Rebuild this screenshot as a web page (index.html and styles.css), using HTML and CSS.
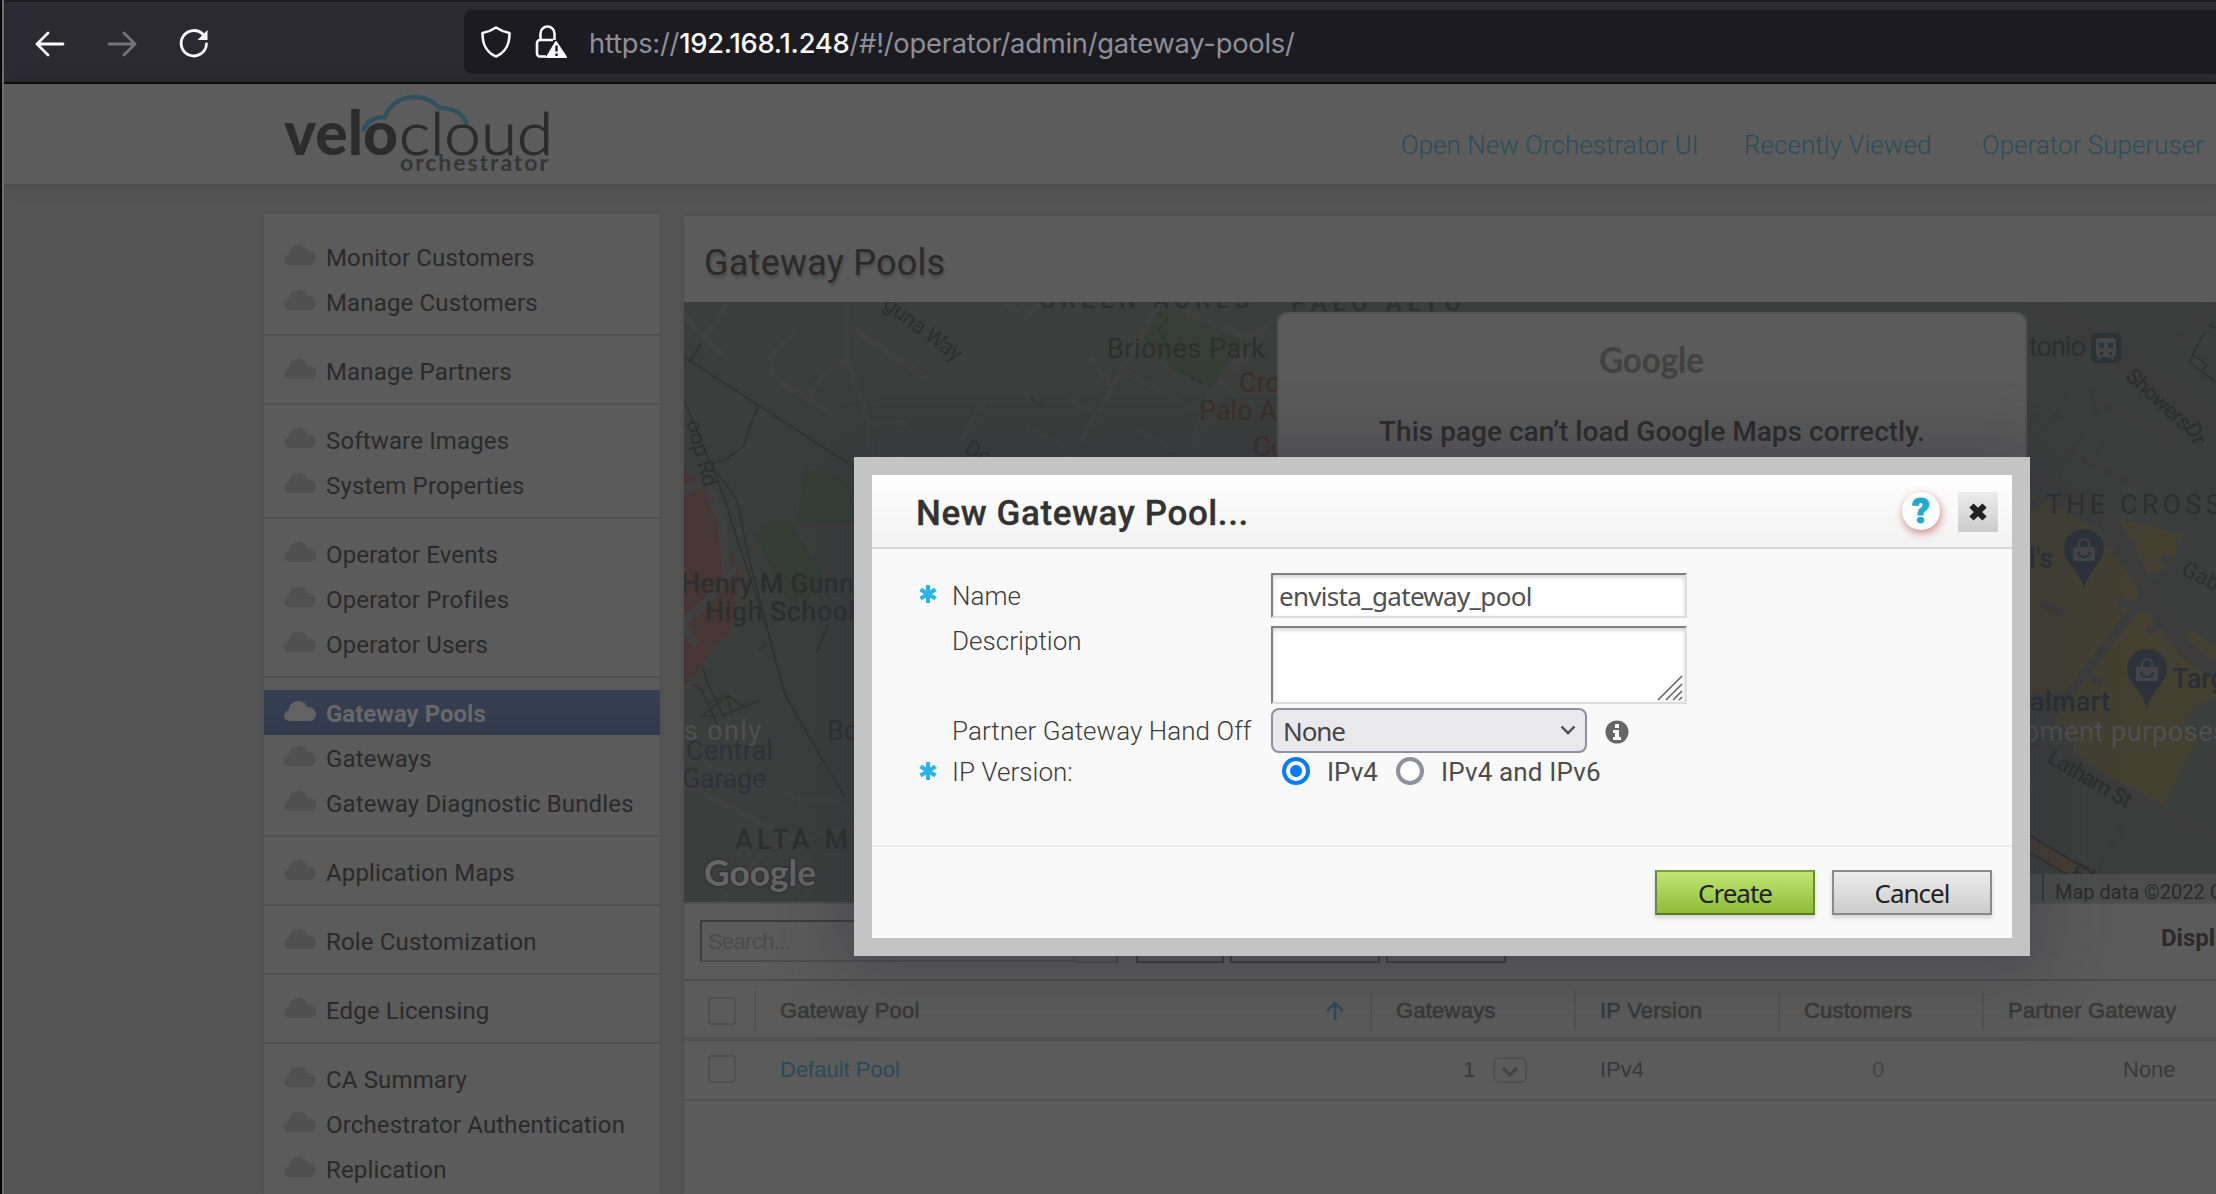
FILE: index.html
```html
<!DOCTYPE html>
<html lang="en">
<head>
<meta charset="utf-8">
<title>Gateway Pools</title>
<link rel="stylesheet" href="styles.css">
</head>
<body>
<svg class="defs" width="0" height="0" aria-hidden="true">
  <symbol id="cloud" viewBox="0 0 32 20"><path d="M6 20C2 20 0 17.500 0 15c0-3 2-5 4.500-5.500C5 4 9 0 14 0c5 0 8 2.500 9.500 6 5 0 8.500 3 8.500 7.200C32 17 29.500 20 26 20z"/></symbol>
  <symbol id="star" viewBox="0 0 18 20"><path d="M9 1v18M1.500 5.500l15 9M16.500 5.500l-15 9" stroke="#28b5ee" stroke-width="4" fill="none"/></symbol>
  <symbol id="pin" viewBox="0 0 42 60"><path d="M21 0a20 20 0 0 1 20 20c0 14-15 20-20 39C16 40 1 34 1 20A20 20 0 0 1 21 0z" fill="#2e323b"/><path d="M10 18h22v14H10z" fill="#424448"/><path d="M16 19v-4a5 5 0 0 1 10 0v4" fill="none" stroke="#424448" stroke-width="2"/><path d="M15 23a6 5 0 0 0 12 0" fill="none" stroke="#2e323b" stroke-width="2.200"/></symbol>
</svg>

<div class="window">
  <header class="toolbar">
    <div class="nav-icons">
      <svg width="30" height="28" viewBox="0 0 30 28" fill="none" stroke="#fbfbfe" stroke-width="2.800" stroke-linecap="round" stroke-linejoin="round"><path d="M28 14H2M13 3L2 14l11 11"/></svg>
      <svg width="30" height="28" viewBox="0 0 30 28" fill="none" stroke="#76757c" stroke-width="2.800" stroke-linecap="round" stroke-linejoin="round"><path d="M2 14h26M17 3l11 11-11 11"/></svg>
      <svg width="30" height="30" viewBox="0 0 30 30"><path d="M24.500 6A12.700 12.700 0 1 0 27.500 15" fill="none" stroke="#fbfbfe" stroke-width="2.800" stroke-linecap="round"/><path d="M28.500 1v10h-10z" fill="#fbfbfe"/></svg>
    </div>
    <div class="urlbar">
      <svg width="30" height="32" viewBox="0 0 30 32" fill="none" stroke="#fbfbfe" stroke-width="2.600" stroke-linejoin="round"><path d="M15 1.500c4 2.700 8 4.500 13.500 5.500 0 11-3 19-13.500 23.500C4.500 26 1.500 18 1.500 7 7 6 11 4.200 15 1.500z"/></svg>
      <svg class="lock" width="32" height="34" viewBox="0 0 32 34"><path d="M11 31.500H5a3 3 0 0 1-3-3V18a3 3 0 0 1 3-3h13M5.500 15V8.500a7 7 0 0 1 14 0V15" fill="none" stroke="#fbfbfe" stroke-width="2.600"/><path d="M21 17l10 15H12z" fill="#fbfbfe" stroke="#fbfbfe" stroke-width="2" stroke-linejoin="round"/><path d="M21.500 20.500v6M21.500 28.500v2.600" stroke="#1c1b22" stroke-width="2.400"/></svg>
      <span class="url">https://<b>192.168.1.248</b>/#!/operator/admin/gateway-pools/</span>
    </div>
  </header>

  <div class="app-header">
    <svg class="logo" width="270" height="84" viewBox="282 92 270 84">
      <path d="M363 127c3-8 10-14 22-14 5-13 16-20 30-20 10 0 19 5 25 11 14 0 24 6 27 17" transform="translate(0 4)" fill="none" stroke="#2c525f" stroke-width="4.500"/>
      <text x="284" y="155" class="logo-bold" textLength="114" lengthAdjust="spacingAndGlyphs">velo</text>
      <text x="399" y="155" class="logo-thin" textLength="154" lengthAdjust="spacingAndGlyphs">cloud</text>
      <text x="400" y="171" class="logo-sub" textLength="148">orchestrator</text>
    </svg>
    <nav class="top-nav"><a class="n1">Open New Orchestrator UI</a><a class="n2">Recently Viewed</a><a class="n3">Operator Superuser</a></nav>
  </div>

  <div class="workspace">
    <aside class="sidebar">
      <ul>
        <li><svg><use href="#cloud"/></svg>Monitor Customers</li>
        <li><svg><use href="#cloud"/></svg>Manage Customers</li>
      </ul>
      <ul><li><svg><use href="#cloud"/></svg>Manage Partners</li></ul>
      <ul>
        <li><svg><use href="#cloud"/></svg>Software Images</li>
        <li><svg><use href="#cloud"/></svg>System Properties</li>
      </ul>
      <ul>
        <li><svg><use href="#cloud"/></svg>Operator Events</li>
        <li><svg><use href="#cloud"/></svg>Operator Profiles</li>
        <li><svg><use href="#cloud"/></svg>Operator Users</li>
      </ul>
      <ul>
        <li class="active"><svg><use href="#cloud"/></svg>Gateway Pools</li>
        <li><svg><use href="#cloud"/></svg>Gateways</li>
        <li><svg><use href="#cloud"/></svg>Gateway Diagnostic Bundles</li>
      </ul>
      <ul><li><svg><use href="#cloud"/></svg>Application Maps</li></ul>
      <ul><li><svg><use href="#cloud"/></svg>Role Customization</li></ul>
      <ul><li><svg><use href="#cloud"/></svg>Edge Licensing</li></ul>
      <ul>
        <li><svg><use href="#cloud"/></svg>CA Summary</li>
        <li><svg><use href="#cloud"/></svg>Orchestrator Authentication</li>
        <li><svg><use href="#cloud"/></svg>Replication</li>
      </ul>
    </aside>

    <main class="panel">
      <h1>Gateway Pools</h1>
      <svg class="map" width="1532" height="600" viewBox="684 302 1532 600">
        <rect x="684" y="302" width="1532" height="600" fill="#3b3e3c"/>
        <path d="M684 470l19 15 20 45 17 47-7 46-49 64z" fill="#463635"/>
        <path d="M1157 310l37 3 53 24-36 53-37-20-31-33zM806 470l29 3 18 17v33l-57-1zM753 533l20-13 17 1 32 54-4 18-28 10z" fill="#363e37"/>
        <path d="M2030 515l16-17 50 32 43 58-3 19-67 86h-39zM2116 518l67 17-10 22-14 15-13 2-13-33zM2146 611l37 47 33 23v16l-17 8-16 15 13 20-33 66-50-24-40-31 3-15-30-20 23-23 70-82zM2189 629l27 17v20l-33-31zM2030 775q5 8 0 22zM2030 494l10 2-10 8z" fill="#434032"/>
        <g fill="none" stroke="#3e3f3e" stroke-width="7" stroke-linecap="round" stroke-linejoin="round">
          <path d="M847 302v55l22 70 2 32M850 327l79 53M793 332l-23 25 2 20 58 36M847 360l-22 13-17 25M728 302l-24 38-20-25M704 340l17 13M871 425l20-5 14 4M983 403l-32 56M1157 307l-36 63-48 88M1092 360l17 23M1121 370l73 40M1070 400l25 12M1029 427l46 26M1138 430l44 25M1189 313l56 24M1005 302l20 15 15-15"/>
          <path d="M1262 327l-50 70-25 65" stroke-width="12"/>
          <path d="M684 490l22-8 16 40 5 50M684 620l20-15 28-35M684 625l10 18" stroke-width="9"/>
          <path d="M684 755l60 25 60 20h30l22 15M684 785l80 40 40 20M720 902l50-55 84-20M806 902l6-45"/>
        </g>
        <g fill="none" stroke="#3c3c3c" stroke-width="6" stroke-linecap="round" stroke-linejoin="round">
          <path d="M2035 302l181 120" stroke-width="26"/>
          <path d="M2216 302l-45 52" stroke-width="12"/>
          <path d="M2028 350l50 20 15 32 103 44v50M2052 480l45-70 30-55M2100 402l22-35 50 50-40 62M2092 460l50-68M2075 455l70 35 28-70M2130 420l56 35M2150 500l36 4M2028 418l22 8 25-50M2060 330l60 32"/>
          <path d="M2030 478l40 12 33 28 26 35 17 35 40 62 30 23" stroke-width="15"/>
          <path d="M2046 724l93-121 24-22 22-24 11-62v-51" stroke-width="9"/>
          <path d="M2026 740l107 54 50 29 33 16M2133 802l-19 39-18 40M2216 755l-57 113-20 34" stroke-width="8"/>
          <path d="M2045 605l14 7M2165 558l10 6M2122 603l8 2M2092 677l6 6M2150 630l9-5" stroke-width="8"/>
          <path d="M2026 842l90 56" stroke-width="14" stroke="#463c32"/>
        </g>
        <path d="M2026 833l90 54M2026 850l80 48" stroke="#322f2c" stroke-width="2"/>
        <g fill="none" stroke="#313331" stroke-width="1.600">
          <path d="M684 357l74 48 96 62M758 405l-15 42-19 13-13 4M684 400l27 64 26 36 10 50 22 85 16 60 60 103M711 464l14 36 14 45 27 80M828 625l-11 27M702 342l-12 20M766 645l-7 4"/>
          <path d="M692 684l10 6 15 35M703 668l5 15 15 33 37-16M700 718l27-22 5 20M709 702l20-6 16 12M700 716h16"/>
          <path d="M1157 313l10 6-8 10 8 15M1180 370l25 15M1030 397l15 12" stroke-dasharray="6 4"/>
          <path d="M2209 325l22 10M2205 332l-16 30 27 20M2193 355l14 9-7 12"/>
        </g>
        <g class="map-label">
          <text x="1039" y="308" textLength="210" font-size="24" class="medium">GREEN ACRES</text>
          <text x="1291" y="311" textLength="170" font-size="24" class="medium">PALO ALTO</text>
          <text x="1107" y="358" textLength="158">Briones Park</text>
          <text transform="translate(882 307) rotate(37)" textLength="92" font-size="22">guna Way</text>
          <text transform="translate(963 452) rotate(31)" font-size="22">Don</text>
          <text transform="translate(686 422) rotate(75)" textLength="68" font-size="22">oop Rd</text>
          <g fill="#3d2e2e"><text x="1239" y="392">Cro</text><text x="1199" y="420">Palo A</text><text x="1253" y="456">Co</text></g>
          <g class="medium"><text x="681" y="593" textLength="173">Henry M Gunn</text><text x="705" y="621" textLength="150">High School</text></g>
          <g fill="#31313a"><text x="686" y="760" textLength="87">Central</text><text x="682" y="788" textLength="84">Garage</text></g>
          <text x="827" y="740">Bo</text>
          <text x="735" y="849" class="medium" textLength="113">ALTA M</text>
          <g fill="#505050"><text x="684" y="740" textLength="77">s only</text><text x="2024" y="741" textLength="203">pment purposes</text></g>
          <text x="2029" y="356" textLength="57">tonio</text>
          <text transform="translate(2124 378) rotate(42)" font-size="22" textLength="80" class="medium">Showers</text>
          <text transform="translate(2184 427) rotate(63)" font-size="22" class="medium">Dr</text>
          <text x="2046" y="514" textLength="187">THE CROSSI</text>
          <g fill="#2a2f38" class="medium"><text x="2029" y="568">l's</text><text x="2030" y="711" textLength="80">almart</text><text x="2172" y="688">Targ</text></g>
          <text transform="translate(2180 574) rotate(26)" font-size="22">Gabr</text>
          <text transform="translate(2046 762) rotate(30)" textLength="93" font-size="22" class="medium">Latham St</text>
          <text transform="translate(2068 878) rotate(30)">El C</text>
        </g>
        <rect x="2091" y="333" width="30" height="30" rx="5" fill="#2d3236"/>
        <path d="M2099 338h14q3 0 3 3v13q0 3-3 3l2 3-3-1-2-2h-8l-2 2-3 1 2-3q-3 0-3-3v-13q0-3 3-3z" fill="#434547"/>
        <path d="M2099 343h5v5h-5zM2108 343h5v5h-5zM2100 352h3v3h-3zM2109 352h3v3h-3z" fill="#2d3236"/>
        <use href="#pin" x="2063" y="529" width="42" height="60"/>
        <use href="#pin" x="2126" y="649" width="42" height="60"/>
        <text x="704" y="886" class="google-mark" textLength="112" lengthAdjust="spacingAndGlyphs">Google</text>
        <rect x="1400" y="874" width="816" height="28" fill="#4c4d4c"/>
        <path d="M2043 874v28" stroke="#333" stroke-width="1.500"/>
        <text x="2055" y="899" class="credit">Map data ©2022 Google</text>
        <rect x="1278" y="313" width="748" height="300" rx="10" fill="#5b5b5b" stroke="#525252" stroke-width="2"/>
        <text x="1599" y="373" class="google-card" textLength="105" lengthAdjust="spacingAndGlyphs">Google</text>
        <text x="1379" y="441" class="error" textLength="546" lengthAdjust="spacingAndGlyphs">This page can’t load Google Maps correctly.</text>
      </svg>
      <div class="tools">
        <div class="search">Search...</div><i class="go"></i><i class="tb b1"></i><i class="tb b2"></i><i class="tb b3"></i>
        <strong>Display</strong>
      </div>
      <div class="grid head">
        <span><i class="check"></i></span>
        <span>Gateway Pool<svg width="20" height="20" viewBox="0 0 20 20" fill="none" stroke="#2a4b59" stroke-width="2.600"><path d="M10 19V2M2 10l8-8 8 8"/></svg></span>
        <span>Gateways</span><span>IP Version</span><span>Customers</span><span>Partner Gateway</span>
      </div>
      <div class="grid row">
        <span><i class="check"></i></span>
        <span class="link">Default Pool</span>
        <span class="count">1<i class="drop"><svg width="18" height="12" viewBox="0 0 18 12" fill="none" stroke="#444" stroke-width="3.300"><path d="M2 2l7 7 7-7"/></svg></i></span>
        <span>IPv4</span><span class="customers">0</span><span class="handoff">None</span>
      </div>
    </main>
  </div>
</div>

<section class="modal">
  <div class="dialog">
    <header><h2>New Gateway Pool...</h2><span class="help">?</span>
      <span class="close"><svg width="20" height="20" viewBox="0 0 20 20"><path d="M3.500 3.500l13 13M16.500 3.500l-13 13" stroke="#222" stroke-width="6"/></svg></span></header>
    <div class="form">
      <div class="field name"><svg><use href="#star"/></svg><label>Name</label><div class="input">envista_gateway_pool</div></div>
      <div class="field desc"><label>Description</label><div class="input area"><svg width="26" height="26" viewBox="0 0 26 26" stroke="#666" stroke-width="1.700"><path d="M1 25L25 1M9 25L25 9M16 25l9-9M22 25l3-3"/></svg></div></div>
      <div class="field hand"><label>Partner Gateway Hand Off</label><div class="select">None<svg width="16" height="11" viewBox="0 0 16 11" fill="none" stroke="#4a4a4f" stroke-width="2.400"><path d="M1.500 1.500L8 8l6.500-6.500"/></svg></div>
        <svg class="info" width="24" height="24" viewBox="0 0 24 24"><circle cx="12" cy="12" r="11.500" fill="#666"/><path d="M10 4h4v4h-4zM8 10h6v7h2v3H8v-3h2v-4H8z" fill="#fff"/></svg></div>
      <div class="field ip"><svg><use href="#star"/></svg><label>IP Version:</label><i class="radio on"></i><span class="r1">IPv4</span><i class="radio"></i><span class="r2">IPv4 and IPv6</span></div>
    </div>
    <footer><span class="btn create">Create</span><span class="btn cancel">Cancel</span></footer>
  </div>
</section>
</body>
</html>
```

FILE: styles.css
```css
* { box-sizing: border-box; }
body { margin: 0; width: 2216px; height: 1194px; overflow: hidden; background: #545454; font-family: Roboto, sans-serif; color: #2a2a2a; position: relative; }
.defs { position: absolute; }
.window { height: 1194px; overflow: hidden; border-left: 4px solid #6e6e6e; }
.window::before { content: ""; position: absolute; left: 0; top: 0; width: 2px; height: 1194px; background: #08080c; z-index: 2; }

.toolbar { height: 84px; display: flex; align-items: center; background: #2b2a33; border-top: 2px solid #1c1b22; border-bottom: 2px solid #0c0c0d; }
.nav-icons { display: flex; align-items: center; gap: 42px; width: 460px; padding: 3px 0 0 31px; }
.urlbar { flex: 1; height: 64px; display: flex; align-items: center; padding-left: 17px; background: #1c1b22; border-radius: 8px 0 0 8px; }
.lock { margin: 0 22px 0 24px; }
.url { padding-top: 3px; font: 27.300px/61px Inter, sans-serif; letter-spacing: -.23px; color: #8f8f98; white-space: nowrap; }
.url b { font-weight: 500; color: #fbfbfe; }

.app-header { height: 100px; display: flex; background: #5c5c5c; position: relative; box-shadow: 0 2px 16px rgba(0,0,0,.16); }
.logo { margin: 8px 0 0 278px; flex: none; }
.logo text { fill: #2c2c2c; font-family: Lato, sans-serif; }
.logo-bold { font-size: 60px; font-weight: 900; }
.logo-thin { font-size: 60px; font-weight: 300; stroke: #2c2c2c; stroke-width: 1px; }
.logo .logo-sub { font-size: 23px; font-weight: 700; fill: #363636; }
.top-nav { display: flex; margin-left: 849px; padding-top: 45px; font-size: 26px; line-height: 32px; font-weight: 300; letter-spacing: .04px; color: #294d58; white-space: nowrap; }
.n1 { width: 343px; } .n2 { width: 238px; }

.workspace { display: flex; align-items: flex-start; height: 1010px; padding: 30px 0 0 260px; }
.sidebar { width: 396px; height: 980px; padding-top: 20px; background: #5b5b5b; box-shadow: 0 0 4px rgba(0,0,0,.08); }
.sidebar ul { margin: 0; padding: 12px 0 10px; list-style: none; border-top: 2px solid #505050; }
.sidebar ul:first-child { border: 0; padding-top: 0; }
.sidebar li { height: 45px; display: flex; align-items: center; padding: 2px 0 0 20px; font-size: 24px; letter-spacing: .15px; white-space: nowrap; }
.sidebar li svg { width: 32px; height: 20px; margin: -5px 10px 0 0; fill: #505050; }
.sidebar .active { background: linear-gradient(#354153, #303a4b); color: #686868; font-weight: 700; letter-spacing: 0; }
.sidebar .active svg { fill: #626262; }

.panel { margin: 2px 0 0 24px; width: 1532px; height: 980px; background: #5b5b5b; box-shadow: 0 0 4px rgba(0,0,0,.12); }
.panel h1 { margin: 0; height: 86px; padding: 5px 0 0 20px; font-size: 36px; line-height: 84px; font-weight: 400; letter-spacing: .25px; text-shadow: 1px 3px 3px rgba(0,0,0,.2); }
.map { display: block; }
.map-label { font-family: Roboto, sans-serif; font-size: 27px; fill: #2e2f2f; }
.medium { font-weight: 500; }
.google-mark, .google-card { font: 700 37px Lato, sans-serif; fill: #656565; stroke: #343434; stroke-width: 3px; paint-order: stroke; }
.google-card { fill: #424242; stroke: none; }
.credit { font-size: 20px; fill: #2a2a2a; }
.error { font-size: 28px; font-weight: 500; fill: #2a2a2a; }

.tools { height: 79px; border-top: 2px solid #505050; border-bottom: 2px solid #4b4b4b; display: flex; padding: 16px 0 0 16px; overflow: hidden; }
.tools > * { flex: none; }
.search { width: 375px; height: 42px; border: 2px solid #4c4c4c; border-top-color: #3c3c3c; border-left-color: #3c3c3c; padding-left: 6px; font: 22px/40px "Liberation Sans", Arial, sans-serif; letter-spacing: -.7px; color: #4b4b4b; }
.go { width: 43px; height: 43px; border-right: 2px solid #444; border-bottom: 2px solid #4b4b4b; background: #595959; }
.tb { height: 43px; border: 2px solid #3b3b3b; }
.b1 { width: 88px; margin-left: 18px; } .b2 { width: 150px; margin-left: 6px; } .b3 { width: 120px; margin-left: 6px; }
.tools strong { margin-left: 655px; font-size: 24px; line-height: 36px; white-space: nowrap; }

.grid { display: grid; grid-template-columns: 72px 616px 204px 204px 204px 300px; font: 22px/26px "Liberation Sans", Arial, sans-serif; color: #393939; white-space: nowrap; }
.grid span { display: flex; align-items: center; padding-left: 24px; }
.head { height: 60px; border-bottom: 4px solid #505050; padding: 10px 0 6px; letter-spacing: .22px; -webkit-text-stroke: .6px #393939; }
.head span { border-right: 2px solid #525252; }
.head svg { margin-left: auto; margin-right: 25px; }
.check { width: 28px; height: 28px; border: 2px solid #505050; border-radius: 4px; }
.row { height: 60px; border-bottom: 2px solid #505050; }
.row .check { margin-top: -3px; }
.row .link { color: #294a57; }
.row .count { padding-left: 91px; }
.drop { display: flex; align-items: center; justify-content: center; width: 34px; height: 26px; margin-left: 18px; border: 2px solid #4f4f4f; border-radius: 6px; }
.drop svg { margin-top: 4px; }
.row .customers { padding-left: 92px; color: #444; }
.row .handoff { padding-left: 139px; }

.modal { position: absolute; left: 854px; top: 457px; width: 1176px; height: 499px; padding: 18px; background: #c4c4c4; box-shadow: 0 0 60px 20px rgba(48,48,56,.35); }
.dialog { height: 463px; background: #f9f9f9; color: #505050; display: flex; flex-direction: column; }
.dialog header { height: 74px; flex: none; display: flex; align-items: center; padding: 0 14px 0 44px; background: linear-gradient(#fff, #f2f2f2); border-bottom: 2px solid #d8d8d8; }
.dialog h2 { margin: 5px auto 0 0; font-size: 35px; font-weight: 500; letter-spacing: .58px; color: #333; -webkit-text-stroke: .3px #333; }
.help { width: 38px; height: 38px; border-radius: 50%; margin-right: 18px; background: #fff; box-shadow: 1px 3px 8px rgba(190,60,60,.6); color: #1eabd1; font: 900 35px/40px Roboto, sans-serif; text-align: center; -webkit-text-stroke: 1px #1eabd1; }
.close { width: 40px; height: 40px; margin-top: 2px; display: flex; align-items: center; justify-content: center; background: linear-gradient(#ececec, #ccc); }
.form { height: 296px; flex: none; padding: 24px 0 0 47px; font-size: 26px; font-weight: 300; color: #3c3c3c; }
.field { display: flex; position: relative; line-height: 45px; white-space: nowrap; }
.field > svg:first-child { width: 18px; height: 20px; margin: 11px 15px 0 0; }
.field label { width: 319px; flex: none; letter-spacing: .05px; }
.name { height: 53px; } .desc { height: 82px; padding-left: 33px; line-height: 31px; } .hand { height: 45px; padding-left: 33px; line-height: 47px; }
.name label { padding-top: 1px; }
.input { width: 416px; height: 45px; padding-left: 6px; background: #fff; border: 2px solid #ddd; border-top-color: #808080; border-left-color: #808080; box-shadow: inset 0 2px 4px rgba(0,0,0,.18); font: 400 26px/42px "Noto Sans", sans-serif; letter-spacing: -.7px; color: #505050; }
.area { height: 78px; display: flex; align-items: flex-end; justify-content: flex-end; padding: 0 2px 1px 0; }
.select { width: 316px; height: 45px; display: flex; align-items: center; justify-content: space-between; padding: 0 9px 0 10px; border: 2px solid #8f8f9d; border-radius: 8px; background: #e9e9ed; font: 400 26px "Noto Sans", sans-serif; letter-spacing: -1.1px; color: #444; }
.info { margin: 12px 0 0 18px; }
.ip { line-height: 38px; font-weight: 400; color: #4c4c4c; }
.ip > svg:first-child { margin-top: 8px; }
.ip label { font-weight: 300; color: #3c3c3c; }
.radio { width: 28px; height: 28px; margin: 4px 0 0 11px; border: 4px solid #8f8f9d; border-radius: 50%; background: #fff; }
.radio.on { border-color: #0a7aff; background: radial-gradient(circle, #0a7aff 0 5.500px, #fff 6.500px); }
.r1 { width: 52px; margin-left: 17px; } .r1 + .radio { margin-left: 17px; } .r2 { margin-left: 17px; letter-spacing: .15px; }
.dialog footer { flex: 1; display: flex; justify-content: flex-end; gap: 17px; padding: 23px 20px 0 0; border-top: 2px solid #ececec; }
.btn { width: 160px; height: 45px; border: 2px solid #8a8a8a; text-align: center; font: 400 26px/42px "Noto Sans", sans-serif; letter-spacing: -1px; color: #222; background: linear-gradient(#ececec, #ccc); box-shadow: 0 3px 4px rgba(0,0,0,.15); }
.create { border-color: #7d9f45 #6b8a37 #5b782c; background: linear-gradient(#bfe772, #8ebb39); }
```
